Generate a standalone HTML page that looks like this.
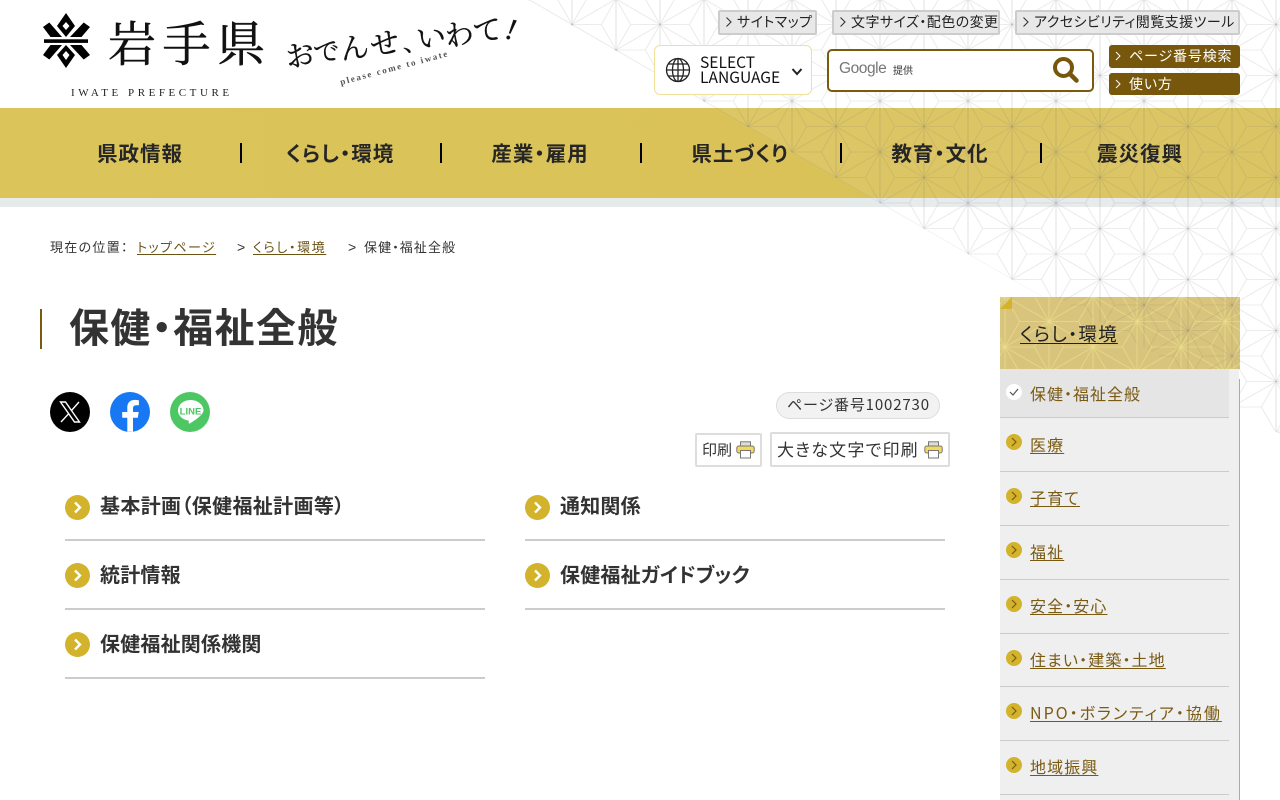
<!DOCTYPE html>
<html lang="ja"><head><meta charset="utf-8"><title>保健・福祉全般</title>
<style>
html,body{margin:0;padding:0;background:#fff}
body{width:1280px;height:800px;overflow:hidden;position:relative;font-family:"Noto Sans CJK JP","Liberation Sans",sans-serif;font-feature-settings:"palt";color:#333}
.a{position:absolute;white-space:nowrap}
a{color:inherit}
.tb{position:absolute;top:10px;height:21px;border:2px solid #ccc;background:#e8e8e8;border-radius:2px;font-size:14px;line-height:21px;color:#222;white-space:nowrap;letter-spacing:.45px;z-index:3}
.tb svg{position:absolute;left:5px;top:4px}
.tb span{position:absolute;left:17px;top:0}
.bb{position:absolute;left:1109px;width:131px;background:#77570b;border-radius:3px;color:#fff;font-size:14px;z-index:3;white-space:nowrap}
.bb span{position:absolute;left:20px;top:0;letter-spacing:.85px}
.bb svg{position:absolute;left:6px;top:6px}
.nv{position:absolute;top:137px;width:200px;text-align:center;font-size:20.5px;line-height:30px;font-weight:700;color:#262626;letter-spacing:1px;z-index:3}
.sp{position:absolute;top:143px;width:2px;height:20px;background:#000;z-index:3}
.lk{position:absolute;font-size:20px;font-weight:700;line-height:30px;color:#333;white-space:nowrap;letter-spacing:.2px}
.ci{position:absolute;width:25px;height:25px}
.ln{position:absolute;width:420px;height:2px;background:#ccc}
.si{position:absolute;left:1030px;font-size:16px;line-height:24px;color:#7a5a12;white-space:nowrap;letter-spacing:1.1px;text-decoration:underline;text-underline-offset:2px;z-index:5}
.sc{position:absolute;left:1006px;width:16px;height:16px;z-index:5}
.sl{position:absolute;left:1000px;width:229px;height:1px;background:#cbcbcb;z-index:5}
.bc{position:absolute;top:237px;font-size:13px;line-height:20px;white-space:nowrap;color:#333}
.bl{color:#6b5314;text-decoration:underline;text-underline-offset:2px}
.gt{font-family:"Liberation Sans",sans-serif;font-size:14px}
</style></head><body>

<!-- nav band -->
<div class="a" style="left:0;top:108px;width:1280px;height:90px;background:linear-gradient(90deg,#dbc55a 0,#dac359 45%,#d8bf57 100%)"></div>
<div class="a" style="left:0;top:198px;width:1280px;height:9px;background:#e5eaea"></div>

<!-- asanoha overlay -->
<svg class="a" style="left:0;top:0;z-index:1" width="1280" height="800" viewBox="0 0 1280 800">
<defs>
<pattern id="as" x="0" y="-1" width="88" height="51" patternUnits="userSpaceOnUse">
<g fill="none" stroke="rgba(110,110,110,.13)" stroke-width="1.1">
<path d="M0 0V51M44 0V51M88 0V51" stroke-width="1.5"/>
<path d="M0 0L44 25.5L88 0M0 51L44 25.5L88 51"/>
<path d="M14.67 25.5L0 0M14.67 25.5L0 51M14.67 25.5H44"/>
<path d="M73.33 25.5L88 0M73.33 25.5L88 51M73.33 25.5H44"/>
<path d="M0 0H29.33L44 25.5M0 51H29.33L44 25.5"/>
<path d="M88 0H58.67L44 25.5M88 51H58.67L44 25.5"/>
</g></pattern>
<pattern id="lt" x="1005" y="296" width="88" height="51" patternUnits="userSpaceOnUse">
<g fill="none" stroke="rgba(238,224,140,.62)" stroke-width="1.1">
<path d="M0 0V51M44 0V51M88 0V51"/>
<path d="M0 0L44 25.5L88 0M0 51L44 25.5L88 51"/>
<path d="M14.67 25.5L0 0M14.67 25.5L0 51M14.67 25.5H44"/>
<path d="M73.33 25.5L88 0M73.33 25.5L88 51M73.33 25.5H44"/>
<path d="M0 0H29.33L44 25.5M0 51H29.33L44 25.5"/>
<path d="M88 0H58.67L44 25.5M88 51H58.67L44 25.5"/>
</g></pattern>
</defs>
<polygon points="528,0 1280,434 1280,0" fill="rgba(255,255,255,.08)"/>
<polygon points="528,0 1280,434 1280,0" fill="url(#as)"/>
</svg>

<!-- logo -->
<svg class="a" style="left:0;top:0;z-index:3" width="540" height="108" viewBox="0 0 540 108">
<g fill="#000">
<path fill-rule="evenodd" d="M66 13L75 26L66 37L57 26ZM66 22L62.500 26L66 30L69.500 26Z"/>
<path fill-rule="evenodd" d="M66 68L57 55L66 45L75 55ZM66 60L69.500 55L66 51L62.500 55Z"/>
<rect x="44" y="39.300" width="44" height="3.600"/>
<path d="M43 27L49.300 22.500L62 37H50.500ZM90 27L83.700 22.500L70 37H81.500Z"/>
<path d="M43 55L49.300 59.500L62 45H50.500ZM90 55L83.700 59.500L70 45H81.500Z"/>
</g>
<text x="108" y="61" font-family="'Noto Serif CJK SC',serif" font-size="48" letter-spacing="6.500" fill="#111" stroke="#111" stroke-width=".5">岩手県</text>
<text x="71" y="96" font-family="'Liberation Serif',serif" font-size="11" letter-spacing="3.550" fill="#222">IWATE PREFECTURE</text>
<g font-family="'Noto Serif CJK SC',serif" fill="#111" stroke="#111" stroke-width=".35" font-size="29">
<text transform="translate(287,68) rotate(-10)">お</text>
<text transform="translate(316,63) rotate(-10)" font-size="26">で</text>
<text transform="translate(343,60) rotate(-10)">ん</text>
<text transform="translate(372,56) rotate(-10)">せ</text>
<text transform="translate(404,52) rotate(-10)" font-size="24">、</text>
<text transform="translate(418,50) rotate(-10)">い</text>
<text transform="translate(447,47) rotate(-10)">わ</text>
<text transform="translate(476,43) rotate(-10)">て</text>
<text transform="translate(504,38) rotate(12)" font-family="'Liberation Serif',serif" font-style="italic" font-size="30">!</text>
</g>
<text transform="translate(341,85) rotate(-15)" font-family="'Liberation Serif',serif" font-size="9" font-weight="700" letter-spacing="1.700" fill="#555">please come to iwate</text>
</svg>

<!-- top buttons -->
<div class="tb" style="left:718px;width:95px"><svg width="8" height="12"><path d="M1.500 1.500L6 6L1.500 10.500" fill="none" stroke="#333" stroke-width="1.100"/></svg><span>サイトマップ</span></div>
<div class="tb" style="left:832px;width:164px"><svg width="8" height="12"><path d="M1.500 1.500L6 6L1.500 10.500" fill="none" stroke="#333" stroke-width="1.100"/></svg><span>文字サイズ・配色の変更</span></div>
<div class="tb" style="left:1015px;width:221px"><svg width="8" height="12"><path d="M1.500 1.500L6 6L1.500 10.500" fill="none" stroke="#333" stroke-width="1.100"/></svg><span>アクセシビリティ閲覧支援ツール</span></div>

<!-- language -->
<div class="a" style="left:654px;top:45px;width:156px;height:48px;border:1px solid #efe09a;border-radius:6px;background:#fff;z-index:3"></div>
<svg class="a" style="left:665px;top:57px;z-index:4" width="26" height="26" viewBox="0 0 26 26"><g fill="none" stroke="#222" stroke-width="1.300"><circle cx="13" cy="13" r="11.500"/><ellipse cx="13" cy="13" rx="5.500" ry="11.500"/><path d="M13 1.500V24.500M1.500 13H24.500M3.300 7H22.700M3.300 19H22.700"/></g></svg>
<div class="a" style="left:700px;top:55px;font-size:15.6px;line-height:14.5px;color:#111;z-index:4;font-feature-settings:normal">SELECT<br>LANGUAGE</div>
<svg class="a" style="left:791px;top:67px;z-index:4" width="12" height="10"><path d="M1.500 2L6 7L10.500 2" fill="none" stroke="#222" stroke-width="2"/></svg>

<!-- search -->
<div class="a" style="left:827px;top:49px;width:263px;height:39px;border:2px solid #7a5a0d;border-radius:5px;background:#fff;z-index:3"></div>
<div class="a" style="left:839px;top:58px;font-family:'Liberation Sans',sans-serif;font-size:15.5px;line-height:22px;color:#777;z-index:4;letter-spacing:-.45px">Google</div>
<div class="a" style="left:893px;top:62px;font-size:10px;font-weight:500;line-height:16px;color:#555;z-index:4">提供</div>
<svg class="a" style="left:1052px;top:56px;z-index:4" width="27" height="27" viewBox="0 0 27 27"><circle cx="11.500" cy="11.500" r="8.500" fill="none" stroke="#77570b" stroke-width="4"/><path d="M17.500 17.500L24.500 24.500" stroke="#77570b" stroke-width="4.500" stroke-linecap="round"/></svg>

<div class="bb" style="top:45px;height:23px;line-height:23px"><svg width="7" height="10"><path d="M1 1L5 5L1 9" fill="none" stroke="#fff" stroke-width="1"/></svg><span>ページ番号検索</span></div>
<div class="bb" style="top:73px;height:22px;line-height:23px"><svg width="7" height="10"><path d="M1 1L5 5L1 9" fill="none" stroke="#fff" stroke-width="1"/></svg><span>使い方</span></div>

<!-- nav -->
<div class="nv" style="left:40px">県政情報</div>
<div class="sp" style="left:240px"></div>
<div class="nv" style="left:240px">くらし・環境</div>
<div class="sp" style="left:440px"></div>
<div class="nv" style="left:440px">産業・雇用</div>
<div class="sp" style="left:640px"></div>
<div class="nv" style="left:640px">県土づくり</div>
<div class="sp" style="left:840px"></div>
<div class="nv" style="left:840px">教育・文化</div>
<div class="sp" style="left:1040px"></div>
<div class="nv" style="left:1040px">震災復興</div>

<!-- breadcrumb -->
<div class="bc" style="left:50px;letter-spacing:1.3px">現在の位置：</div>
<div class="bc bl" style="left:137px;letter-spacing:1.4px">トップページ</div>
<div class="bc gt" style="left:237px">&gt;</div>
<div class="bc bl" style="left:253px;letter-spacing:1.6px">くらし・環境</div>
<div class="bc gt" style="left:348px">&gt;</div>
<div class="bc" style="left:364px;letter-spacing:1.1px">保健・福祉全般</div>

<!-- title -->
<div class="a" style="left:40px;top:309px;width:2px;height:40px;background:#7a5a0d"></div>
<div class="a" style="left:69px;top:298px;font-size:40px;line-height:54px;font-weight:700;color:#333;letter-spacing:1.4px">保健・福祉全般</div>

<!-- social -->
<svg class="a" style="left:50px;top:392px" width="40" height="40" viewBox="0 0 40 40"><circle cx="20" cy="20" r="20" fill="#000"/><path d="M10.500 10H15.500L29.500 30H24.500Z" fill="none" stroke="#fff" stroke-width="1.400"/><path d="M29 10L21.500 18.500M18.700 21.700L11 30" fill="none" stroke="#fff" stroke-width="1.400"/></svg>
<svg class="a" style="left:110px;top:392px" width="40" height="40" viewBox="0 0 40 40"><circle cx="20" cy="20" r="20" fill="#1877f2"/><path fill="#fff" d="M27.800 25.800L28.700 20H23V16.300c0-1.600.8-3.100 3.200-3.100H28.900V8.300s-2.200-.4-4.300-.4c-4.400 0-7.300 2.700-7.300 7.500V20H12.200v5.800H17.300V39.700h5.700V25.800z"/></svg>
<svg class="a" style="left:170px;top:392px" width="40" height="40" viewBox="0 0 40 40"><circle cx="20" cy="20" r="20" fill="#4cc764"/><path fill="#fff" d="M20.500 8C13.600 8 8 12.500 8 18.500c0 5 4.300 9.100 10.200 10 .7.2.6.8.5 2.200 0 .8.5 1.100 1.200.7 3-1.700 13.600-8.500 13.600-12.900C33.500 12.500 27.400 8 20.500 8z"/><text x="20.500" y="22.400" text-anchor="middle" font-family="'Liberation Sans',sans-serif" font-weight="700" font-size="9.500" fill="#4cc764">LINE</text></svg>

<!-- page no. -->
<div class="a" style="left:776px;top:392px;width:162px;height:25px;border:1px solid #ddd;border-radius:14px;background:#f2f2f2"></div>
<div class="a" style="left:787px;top:393px;font-size:15px;line-height:24px;color:#333;letter-spacing:.85px">ページ番号1002730</div>

<!-- print -->
<div class="a" style="left:695px;top:433px;width:63px;height:30px;border:2px solid #ddd;border-radius:2px;background:#fff"></div>
<div class="a" style="left:702px;top:438px;font-size:15px;line-height:24px;color:#333">印刷</div>
<svg class="a" style="left:736px;top:441px" width="19" height="18" viewBox="0 0 19 18"><rect x="4.500" y=".8" width="10" height="5" fill="#ddd" stroke="#777"/><rect x=".8" y="5" width="17.400" height="7" rx="2" fill="#f4d85c" stroke="#777"/><rect x="4.500" y="9.500" width="10" height="7.500" fill="#fff" stroke="#777"/></svg>
<div class="a" style="left:770px;top:432px;width:176px;height:31px;border:2px solid #ddd;border-radius:2px;background:#fff"></div>
<div class="a" style="left:777px;top:436px;font-size:17px;line-height:26px;color:#333;letter-spacing:1.200px">大きな文字で印刷</div>
<svg class="a" style="left:924px;top:441px" width="19" height="18" viewBox="0 0 19 18"><rect x="4.500" y=".8" width="10" height="5" fill="#ddd" stroke="#777"/><rect x=".8" y="5" width="17.400" height="7" rx="2" fill="#f4d85c" stroke="#777"/><rect x="4.500" y="9.500" width="10" height="7.500" fill="#fff" stroke="#777"/></svg>

<!-- links -->
<svg class="ci" style="left:65px;top:495px" viewBox="0 0 25 25"><circle cx="12.500" cy="12.500" r="12.500" fill="#d2b32b"/><path d="M10 7.500L15 12.500L10 17.500" fill="none" stroke="#fff" stroke-width="2.400"/></svg>
<div class="lk" style="left:100px;top:490px;letter-spacing:.35px">基本計画（保健福祉計画等）</div>
<div class="ln" style="left:65px;top:539px"></div>
<svg class="ci" style="left:525px;top:495px" viewBox="0 0 25 25"><circle cx="12.500" cy="12.500" r="12.500" fill="#d2b32b"/><path d="M10 7.500L15 12.500L10 17.500" fill="none" stroke="#fff" stroke-width="2.400"/></svg>
<div class="lk" style="left:560px;top:490px">通知関係</div>
<div class="ln" style="left:525px;top:539px"></div>
<svg class="ci" style="left:65px;top:563px" viewBox="0 0 25 25"><circle cx="12.500" cy="12.500" r="12.500" fill="#d2b32b"/><path d="M10 7.500L15 12.500L10 17.500" fill="none" stroke="#fff" stroke-width="2.400"/></svg>
<div class="lk" style="left:100px;top:559px">統計情報</div>
<div class="ln" style="left:65px;top:608px"></div>
<svg class="ci" style="left:525px;top:563px" viewBox="0 0 25 25"><circle cx="12.500" cy="12.500" r="12.500" fill="#d2b32b"/><path d="M10 7.500L15 12.500L10 17.500" fill="none" stroke="#fff" stroke-width="2.400"/></svg>
<div class="lk" style="left:560px;top:559px">保健福祉ガイドブック</div>
<div class="ln" style="left:525px;top:608px"></div>
<svg class="ci" style="left:65px;top:632px" viewBox="0 0 25 25"><circle cx="12.500" cy="12.500" r="12.500" fill="#d2b32b"/><path d="M10 7.500L15 12.500L10 17.500" fill="none" stroke="#fff" stroke-width="2.400"/></svg>
<div class="lk" style="left:100px;top:628px">保健福祉関係機関</div>
<div class="ln" style="left:65px;top:677px"></div>

<!-- sidebar -->
<svg class="a" style="left:1000px;top:297px;z-index:4" width="240" height="72" viewBox="1000 297 240 72">
<rect x="1000" y="297" width="240" height="72" fill="#d8c47c"/>
<rect x="1000" y="297" width="240" height="72" fill="url(#lt)"/>
<polygon points="1057,297 1240,297 1240,369 1181,369 1057,297" fill="url(#as)"/>
<polygon points="1000,309 1012,297 1012,309" fill="#d2b32b"/>
</svg>
<div class="a" style="left:1020px;top:321px;font-size:18.5px;line-height:26px;color:#222;text-decoration:underline;text-underline-offset:2px;letter-spacing:1.200px;z-index:5">くらし・環境</div>
<div class="a" style="left:1000px;top:369px;width:239px;height:431px;background:#efefef;z-index:4"></div>
<div class="a" style="left:1239px;top:379px;width:1px;height:421px;background:#cfae3a;z-index:5"></div>
<div class="a" style="left:1000px;top:369px;width:229px;height:48px;background:#e5e5e5;z-index:4"></div>

<svg class="sc" style="top:384px" viewBox="0 0 16 16"><circle cx="8" cy="8" r="8" fill="#fff"/><path d="M4 8L7 11L12 5" fill="none" stroke="#555" stroke-width="1.200"/></svg>
<div class="si" style="top:381px;text-decoration:none;letter-spacing:1px">保健・福祉全般</div>
<div class="sl" style="top:417px"></div>

<svg class="sc" style="top:434px" viewBox="0 0 16 16"><circle cx="8" cy="8" r="8" fill="#d2b32b"/><path d="M6 4L10 8L6 12" fill="none" stroke="#7a5a12" stroke-width="1.200"/></svg>
<div class="si" style="top:432px">医療</div>
<div class="sl" style="top:471px"></div>

<svg class="sc" style="top:488px" viewBox="0 0 16 16"><circle cx="8" cy="8" r="8" fill="#d2b32b"/><path d="M6 4L10 8L6 12" fill="none" stroke="#7a5a12" stroke-width="1.200"/></svg>
<div class="si" style="top:485px">子育て</div>
<div class="sl" style="top:525px"></div>

<svg class="sc" style="top:542px" viewBox="0 0 16 16"><circle cx="8" cy="8" r="8" fill="#d2b32b"/><path d="M6 4L10 8L6 12" fill="none" stroke="#7a5a12" stroke-width="1.200"/></svg>
<div class="si" style="top:539px">福祉</div>
<div class="sl" style="top:579px"></div>

<svg class="sc" style="top:596px" viewBox="0 0 16 16"><circle cx="8" cy="8" r="8" fill="#d2b32b"/><path d="M6 4L10 8L6 12" fill="none" stroke="#7a5a12" stroke-width="1.200"/></svg>
<div class="si" style="top:593px">安全・安心</div>
<div class="sl" style="top:633px"></div>

<svg class="sc" style="top:650px" viewBox="0 0 16 16"><circle cx="8" cy="8" r="8" fill="#d2b32b"/><path d="M6 4L10 8L6 12" fill="none" stroke="#7a5a12" stroke-width="1.200"/></svg>
<div class="si" style="top:647px">住まい・建築・土地</div>
<div class="sl" style="top:686px"></div>

<svg class="sc" style="top:703px" viewBox="0 0 16 16"><circle cx="8" cy="8" r="8" fill="#d2b32b"/><path d="M6 4L10 8L6 12" fill="none" stroke="#7a5a12" stroke-width="1.200"/></svg>
<div class="si" style="top:700px;letter-spacing:2px">NPO・ボランティア・協働</div>
<div class="sl" style="top:740px"></div>

<svg class="sc" style="top:757px" viewBox="0 0 16 16"><circle cx="8" cy="8" r="8" fill="#d2b32b"/><path d="M6 4L10 8L6 12" fill="none" stroke="#7a5a12" stroke-width="1.200"/></svg>
<div class="si" style="top:754px">地域振興</div>
<div class="sl" style="top:794px"></div>

</body></html>
